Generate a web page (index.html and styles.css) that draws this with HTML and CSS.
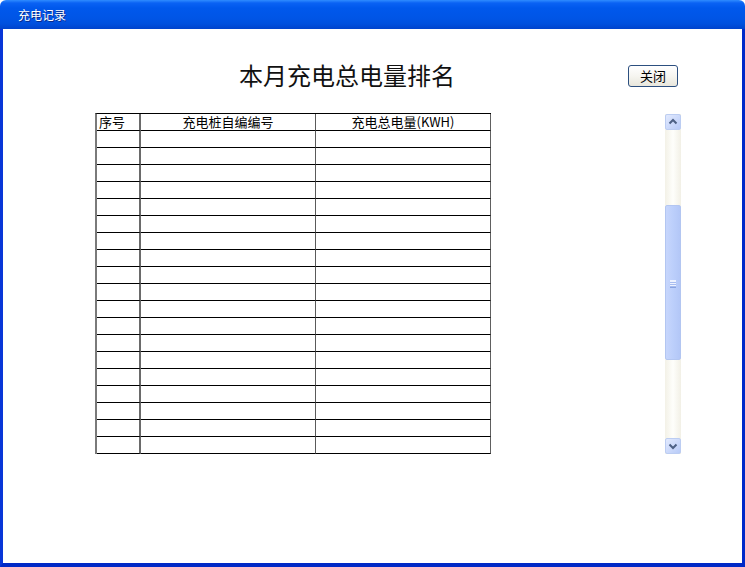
FILE: index.html
```html
<!DOCTYPE html>
<html lang="zh">
<head>
<meta charset="utf-8">
<title>充电记录</title>
<link rel="stylesheet" href="styles.css">
</head>
<body>
<div class="window">
  <div class="titlebar"><span class="caption">充电记录</span></div>
  <div class="client">
    <div class="top-row">
      <h1 class="title">本月充电总电量排名</h1>
      <button class="close-btn">关闭</button>
    </div>
    <div class="main-row">
      <div class="grid">
        <div class="cell head c1 left">序号</div>
        <div class="cell head c2">充电桩自编编号</div>
        <div class="cell head c3">充电总电量(KWH)</div>
        <div class="cell c1"></div><div class="cell c2"></div><div class="cell c3"></div>
        <div class="cell c1"></div><div class="cell c2"></div><div class="cell c3"></div>
        <div class="cell c1"></div><div class="cell c2"></div><div class="cell c3"></div>
        <div class="cell c1"></div><div class="cell c2"></div><div class="cell c3"></div>
        <div class="cell c1"></div><div class="cell c2"></div><div class="cell c3"></div>
        <div class="cell c1"></div><div class="cell c2"></div><div class="cell c3"></div>
        <div class="cell c1"></div><div class="cell c2"></div><div class="cell c3"></div>
        <div class="cell c1"></div><div class="cell c2"></div><div class="cell c3"></div>
        <div class="cell c1"></div><div class="cell c2"></div><div class="cell c3"></div>
        <div class="cell c1"></div><div class="cell c2"></div><div class="cell c3"></div>
        <div class="cell c1"></div><div class="cell c2"></div><div class="cell c3"></div>
        <div class="cell c1"></div><div class="cell c2"></div><div class="cell c3"></div>
        <div class="cell c1"></div><div class="cell c2"></div><div class="cell c3"></div>
        <div class="cell c1"></div><div class="cell c2"></div><div class="cell c3"></div>
        <div class="cell c1"></div><div class="cell c2"></div><div class="cell c3"></div>
        <div class="cell c1"></div><div class="cell c2"></div><div class="cell c3"></div>
        <div class="cell c1"></div><div class="cell c2"></div><div class="cell c3"></div>
        <div class="cell c1"></div><div class="cell c2"></div><div class="cell c3"></div>
        <div class="cell c1"></div><div class="cell c2"></div><div class="cell c3"></div>
      </div>
      <div class="scrollbar">
        <div class="sb-btn">
          <svg width="16" height="16" viewBox="0 0 16 16"><path d="M4.5 9.5 L8 6 L11.5 9.5" fill="none" stroke="#4d6185" stroke-width="2"/></svg>
        </div>
        <div class="sb-track">
          <div class="sb-thumb"><span class="grip"></span></div>
        </div>
        <div class="sb-btn">
          <svg width="16" height="16" viewBox="0 0 16 16"><path d="M4.5 6.5 L8 10 L11.5 6.5" fill="none" stroke="#4d6185" stroke-width="2"/></svg>
        </div>
      </div>
    </div>
  </div>
</div>
</body>
</html>
```

FILE: styles.css
```css
html, body {
  margin: 0;
  padding: 0;
  background: #fff;
}

.window {
  width: 745px;
  height: 567px;
  display: flex;
  flex-direction: column;
  font-family: "Noto Sans CJK SC", sans-serif;
}

.titlebar {
  height: 29px;
  flex: none;
  box-sizing: border-box;
  background: linear-gradient(to bottom, #2f8cff 0px, #0a62f4 3px, #0058ec 8px, #0055e6 18px, #0050dd 24px, #0043cc 29px);
  border-radius: 6px 6px 0 0;
  display: flex;
  align-items: center;
  padding-left: 18px;
  padding-top: 1px;
}

.caption {
  color: #fff;
  font-size: 12px;
  line-height: 14px;
  text-shadow: 1px 1px 0 #0a2a8a;
}

.client {
  flex: 1;
  background: #fff;
  border-left: 3px solid #0836d8;
  border-right: 3px solid #0029c9;
  border-bottom: 4px solid #0029c6;
  display: flex;
  flex-direction: column;
}

.top-row {
  display: flex;
  align-items: center;
  padding-top: 32px;
}

.title {
  margin: 0 0 0 236px;
  font-size: 24px;
  font-weight: normal;
  line-height: 28px;
  color: #111;
}

.close-btn {
  margin-left: auto;
  margin-right: 64px;
  margin-top: 2px;
  width: 50px;
  height: 22px;
  padding: 0;
  box-sizing: border-box;
  border: 1px solid #2c4f7f;
  border-radius: 3px;
  background: linear-gradient(to bottom, #ffffff 0%, #f6f5f0 50%, #e8e6dc 100%);
  font-family: "Noto Sans CJK SC", sans-serif;
  font-size: 13px;
  line-height: 18px;
  color: #000;
}

.main-row {
  display: flex;
  align-items: flex-start;
  margin-top: 24px;
}

.grid {
  margin-left: 92px;
  display: grid;
  grid-template-columns: 44px 175px 175px;
  border-left: 2px solid #7a7a7a;
  border-top: 1px solid #000;
}

.cell {
  height: 17px;
  box-sizing: border-box;
  border-bottom: 1px solid #000;
  border-right: 1px solid #3a3a3a;
  font-size: 13px;
  line-height: 16px;
  color: #000;
  text-align: center;
  white-space: nowrap;
}

.cell.c1 {
  border-right: 2px solid #6a6a6a;
}

.cell.c2 {
  border-right: 1px solid #5a5a5a;
}

.cell.c3 {
  border-right: 1px solid #606060;
}

.cell.left {
  text-align: left;
  padding-left: 2px;
}

.scrollbar {
  margin-left: 174px;
  margin-top: 1px;
  width: 16px;
  height: 340px;
  display: flex;
  flex-direction: column;
  background: linear-gradient(to right, #f3f1e7, #fefefb 50%, #f2f0e6);
}

.sb-btn {
  width: 16px;
  height: 16px;
  box-sizing: border-box;
  border: 1px solid #bccdf2;
  border-radius: 2px;
  background: linear-gradient(to bottom right, #e2eafe, #b8cbf8);
  display: flex;
}

.sb-btn svg {
  margin: -1px;
}

.sb-track {
  flex: 1;
  display: flex;
  flex-direction: column;
  padding-top: 75px;
  padding-bottom: 78px;
}

.sb-thumb {
  flex: 1;
  box-sizing: border-box;
  border: 1px solid #b3c6f1;
  border-radius: 2px;
  background: linear-gradient(to right, #c7d6fc, #bccffb 50%, #b3c7f7);
  display: flex;
  align-items: center;
  justify-content: center;
}

.grip {
  width: 6px;
  height: 6px;
  border-top: 1px solid #eef3ff;
  border-bottom: 1px solid #8aa4e0;
  background: repeating-linear-gradient(to bottom, #eef3ff 0 1px, #a8bdf0 1px 2px);
  margin-top: 3px;
}
```
